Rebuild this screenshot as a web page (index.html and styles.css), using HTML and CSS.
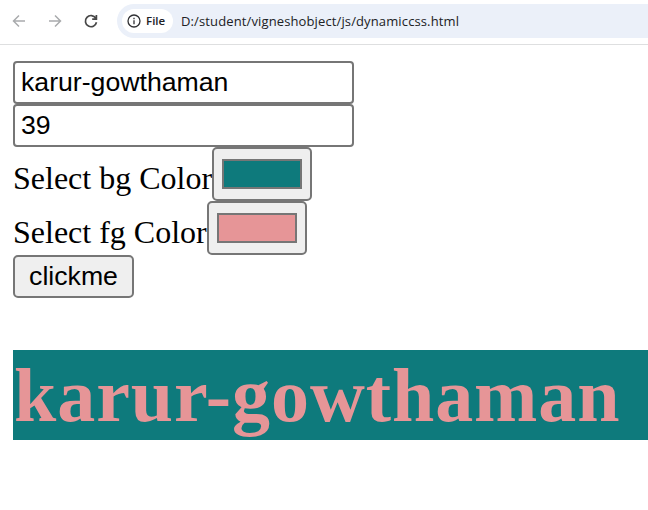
FILE: index.html
```html
<!DOCTYPE html>
<html lang="en">
<head>
<meta charset="utf-8">
<title>dynamiccss</title>
<link rel="stylesheet" href="styles.css">
</head>
<body>
<header class="toolbar">
  <svg class="nav" viewBox="0 0 16 16"><path d="M14 8H3M8 2.5 2.5 8 8 13.5"/></svg>
  <svg class="nav" viewBox="0 0 16 16"><path d="M2 8H13M8 2.5 13.5 8 8 13.5"/></svg>
  <svg class="nav reload" viewBox="0 0 16 16"><path d="M12.8 5.2A5.6 5.6 0 1 0 13.5 9.3M13.4 2V6.2H9.2"/></svg>
  <div class="address">
    <div class="chip">
      <svg class="info" viewBox="0 0 14 14"><circle cx="7" cy="7" r="6"/><path d="M7 6.3V10.2M7 3.8V5.2"/></svg>
      <span>File</span>
    </div>
    <span class="url">D:/student/vigneshobject/js/dynamiccss.html</span>
  </div>
</header>
<main class="page">
  <input class="field" type="text" value="karur-gowthaman">
  <input class="field" type="text" value="39">
  <div class="row"><span class="label bg-label">Select bg Color</span><div class="picker"><div class="swatch teal"></div></div></div>
  <div class="row"><span class="label fg-label">Select fg Color</span><div class="picker"><div class="swatch pink"></div></div></div>
  <button class="btn">clickme</button>
  <h1 class="result">karur-gowthaman</h1>
</main>
</body>
</html>
```
FILE: styles.css
```css
* { box-sizing: border-box; }
body {
  margin: 0;
  height: 510px;
  overflow: hidden;
  background: #fff;
  color: #000;
}
.toolbar {
  display: flex;
  align-items: center;
  height: 45px;
  padding: 0 0 3px 11px;
  border-bottom: 1px solid #dedfe0;
}
.nav {
  width: 16px;
  height: 16px;
  margin-right: 20px;
  fill: none;
  stroke: #a9abad;
  stroke-width: 1.5;
}
.reload { margin-right: 18px; stroke: #474747; stroke-width: 1.7; }
.address {
  display: flex;
  flex: 1;
  align-items: center;
  height: 34px;
  padding-left: 5px;
  border-radius: 17px 0 0 17px;
  background: #ebf0f9;
  font-family: "Open Sans", sans-serif;
  color: #202124;
}
.chip {
  display: flex;
  align-items: center;
  gap: 5px;
  width: 51px;
  height: 24px;
  padding-left: 5px;
  border-radius: 12px;
  background: #fff;
  font-size: 11.5px;
  font-weight: 600;
}
.info { flex: none; width: 14px; height: 14px; fill: none; stroke: #303134; stroke-width: 1.3; }
.url { margin-left: 8px; font-size: 13px; letter-spacing: 0.125px; white-space: nowrap; }
.page {
  display: flex;
  flex-direction: column;
  align-items: flex-start;
  padding: 16px 0 0 13px;
}
.field {
  display: block;
  width: 341px;
  height: 43px;
  margin: 0;
  padding: 0 6px;
  border: 2px solid #767676;
  border-radius: 4px;
  background: #fff;
  font: 26.667px "Liberation Sans", Arial, sans-serif;
  outline: none;
}
.row { display: flex; align-items: center; height: 54px; }
.label {
  padding-top: 8px;
  font: 32px/36px "Liberation Serif", "Times New Roman", serif;
  white-space: nowrap;
}
.bg-label { width: 199px; }
.fg-label { width: 194px; }
.picker {
  width: 100px;
  height: 54px;
  padding: 10px 8px;
  border: 2px solid #767676;
  border-radius: 5px;
  background: #efefef;
}
.swatch { width: 80px; height: 30px; border: 2px solid #767676; }
.teal { background: #0e7a7c; }
.pink { background: #e69597; }
.btn {
  width: 121px;
  height: 43px;
  padding: 0;
  border: 2px solid #767676;
  border-radius: 5px;
  background: #efefef;
  color: #000;
  font: 26.667px "Liberation Sans", Arial, sans-serif;
}
.result {
  align-self: stretch;
  height: 90px;
  margin: 52px 0 0;
  padding-left: 1px;
  background: #0e7a7c;
  color: #e69597;
  font: bold 76px/91px "Liberation Serif", "Times New Roman", serif;
  letter-spacing: 0.93px;
  white-space: nowrap;
}
```
